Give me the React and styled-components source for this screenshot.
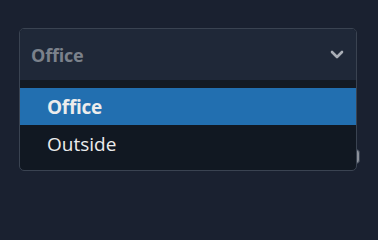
import React from "react";
import styled, { createGlobalStyle } from "styled-components";

const Global = createGlobalStyle`
  html, body { margin: 0; padding: 0; background: #1a2130; }
  body { font-family: "Open Sans", "Noto Sans", sans-serif; }
`;

const Page = styled.div`
  width: 378px;
  height: 230px;
  padding: 28px 0 0 19px;
  box-sizing: border-box;
  position: relative;
  background: #1a2130;
`;

const Knob = styled.div`
  position: absolute;
  left: 354px;
  top: 149px;
  width: 6px;
  height: 15px;
  border-radius: 0 4px 4px 0;
  background: #8c919a;
  border: 1px solid #3b4453;
  box-sizing: border-box;
`;

const Select = styled.div`
  position: relative;
  z-index: 1;
  width: 338px;
  border: 1px solid #3a4351;
  border-radius: 5px;
  overflow: hidden;
  box-sizing: border-box;
  background: #111822;
`;

const Header = styled.div`
  height: 51px;
  display: flex;
  align-items: center;
  justify-content: space-between;
  padding: 0 12px 0 11px;
  background: #1f2838;
`;

const Value = styled.span`
  color: #7b818b;
  font-weight: 700;
  font-size: 18px;
  letter-spacing: -0.2px;
`;

const Strip = styled.div`
  height: 8px;
  background: #131a24;
`;

const List = styled.div`
  display: flex;
  flex-direction: column;
  padding-bottom: 8px;
`;

const Option = styled.div`
  height: 37px;
  display: flex;
  align-items: center;
  padding-left: 27px;
  font-size: 19px;
  color: #ececec;
  background: ${(p) => (p.$active ? "#226fb0" : "transparent")};
  font-weight: ${(p) => (p.$active ? 700 : 400)};
  letter-spacing: ${(p) => (p.$active ? "-0.3px" : "0")};
`;

const Chevron = () => (
  <svg width="14" height="9" viewBox="0 0 14 9">
    <path d="M2 2 L7 7 L12 2" fill="none" stroke="#a9aeb6" strokeWidth="2.6" strokeLinecap="round" strokeLinejoin="round" />
  </svg>
);

export default function App() {
  return (
    <Page>
      <Global />
      <Knob />
      <Select>
        <Header>
          <Value>Office</Value>
          <Chevron />
        </Header>
        <Strip />
        <List>
          <Option $active>Office</Option>
          <Option>Outside</Option>
        </List>
      </Select>
    </Page>
  );
}
